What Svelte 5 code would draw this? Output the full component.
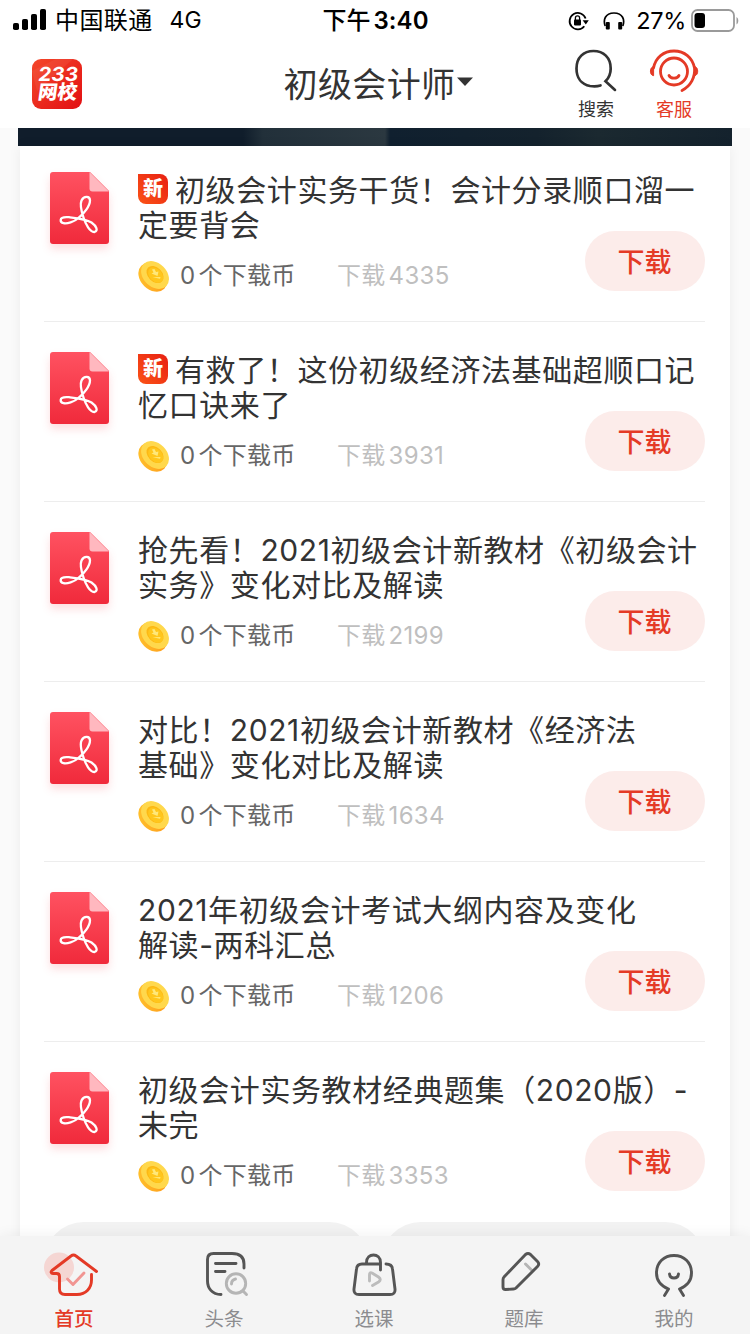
<script lang="ts">
	type Doc = { lines: string[]; downloads: number; isNew?: boolean };

	const docs: Doc[] = [
		{ lines: ['初级会计实务干货！会计分录顺口溜一', '定要背会'], downloads: 4335, isNew: true },
		{ lines: ['有救了！这份初级经济法基础超顺口记', '忆口诀来了'], downloads: 3931, isNew: true },
		{ lines: ['抢先看！2021初级会计新教材《初级会计', '实务》变化对比及解读'], downloads: 2199 },
		{ lines: ['对比！2021初级会计新教材《经济法', '基础》变化对比及解读'], downloads: 1634 },
		{ lines: ['2021年初级会计考试大纲内容及变化', '解读-两科汇总'], downloads: 1206 },
		{ lines: ['初级会计实务教材经典题集（2020版）-', '未完'], downloads: 3353 }
	];

	const tabs = [
		{ id: 'home', label: '首页' },
		{ id: 'news', label: '头条' },
		{ id: 'course', label: '选课' },
		{ id: 'exam', label: '题库' },
		{ id: 'mine', label: '我的' }
	];

	let active = $state('home');
</script>

<svg class="defs" width="0" height="0">
	<defs>
		<linearGradient id="pdf" x1="0" y1="0" x2="0" y2="1">
			<stop offset="0" stop-color="#ff5261" />
			<stop offset="1" stop-color="#f02a3b" />
		</linearGradient>
		<linearGradient id="edge" x1="0" y1="0" x2="1" y2="1">
			<stop offset="0" stop-color="#ffc62e" />
			<stop offset="1" stop-color="#ff9218" />
		</linearGradient>
		<linearGradient id="logo" x1="0" y1="0" x2="1" y2="1">
			<stop offset="0" stop-color="#f4472a" />
			<stop offset="1" stop-color="#e20f12" />
		</linearGradient>
	</defs>
</svg>

<div class="app">
	<div class="status">
		<div class="side">
			<svg class="signal" width="34" height="22" viewBox="0 0 34 22">
				<rect x="0" y="14" width="6" height="7" rx="1.8" />
				<rect x="9" y="10" width="6" height="11" rx="1.8" />
				<rect x="18" y="5" width="6" height="16" rx="1.8" />
				<rect x="27" y="0" width="6" height="21" rx="1.8" />
			</svg>
			<span class="carrier">中国联通</span>
			<span class="net">4G</span>
		</div>
		<div class="clock">下午<span>3:40</span></div>
		<div class="side right">
			<svg width="22" height="20" viewBox="0 0 22 20">
				<path d="M16.3 15.2A8.2 8.2 0 1 1 17.6 7.5" fill="none" stroke="#000" stroke-width="1.8" />
				<path d="M14.6 9.2h6.2l-3 4.3z" />
				<rect x="6" y="8.6" width="7" height="5.8" rx=".8" />
				<path d="M7.4 9V7a2.1 2.1 0 0 1 4.2 0v2" fill="none" stroke="#000" stroke-width="1.3" />
			</svg>
			<svg class="phones" width="22" height="20" viewBox="0 0 22 20">
				<path d="M2.2 15C0 9 2 2 11 2s11 7 8.800 13" fill="none" stroke="#000" stroke-width="1.7" />
				<rect x="2.800" y="11" width="4" height="7.500" rx="1" />
				<rect x="15.200" y="11" width="4" height="7.500" rx="1" />
			</svg>
			<span class="percent">27%</span>
			<svg width="48" height="24" viewBox="0 0 48 24">
				<rect x="1" y="1" width="42" height="21" rx="5.500" fill="none" stroke="#9a9a9a" stroke-width="1.800" />
				<rect x="3.500" y="4" width="10.500" height="15" rx="3" />
				<path d="M45.500 8c2.400 1.500 2.400 6 0 7.500z" fill="#9a9a9a" />
			</svg>
		</div>
	</div>

	<header>
		<svg class="logo" width="50" height="50" viewBox="0 0 50 50">
			<rect width="50" height="50" rx="9" fill="url(#logo)" />
			<path d="M0 12 24 0h17L5 32z" fill="#fff" opacity=".06" />
			<g fill="#fff" font-weight="800" transform="skewX(-8)">
				<text x="8.500" y="22" font-size="19.500" font-weight="700" textLength="40" lengthAdjust="spacingAndGlyphs">233</text>
				<text x="11" y="40.500" font-size="19.500" textLength="39" lengthAdjust="spacingAndGlyphs">网校</text>
			</g>
		</svg>
		<button class="subject">
			初级会计师
			<svg width="18" height="10" viewBox="0 0 18 10"><path d="M1 .5h16L9 9z" fill="#333" /></svg>
		</button>
		<div class="actions">
			<button class="action">
				<svg width="48" height="46" viewBox="0 0 48 46" fill="none" stroke="#333" stroke-width="2.700" stroke-linecap="round">
					<path d="M28.500 37.500C25 38.600 22 38.600 18 38 9.500 36.500 4.500 30 4.500 20.500 4.500 9.500 11.500 3 21.500 3s17.200 6.500 17.200 17.500c0 5-1.800 9.500-5.200 12.800l9.500 8.600" />
				</svg>
				<span>搜索</span>
			</button>
			<button class="action red">
				<svg width="50" height="46" viewBox="0 0 50 46" fill="none" stroke="#e43a26" stroke-width="2.800" stroke-linecap="round">
					<path d="M4.500 20C6.500 9.500 14.500 3 25 3s18.500 6.500 20.500 17c.8 9-3.500 18-12.500 22.500" />
					<circle cx="25" cy="23.500" r="13.500" />
					<path d="M20 27.500c1.800 3.500 8.200 3.500 10 0" />
					<path d="M4.600 18.500v9.200C.3 27.400.3 18.800 4.600 18.500zM45.600 18.500v9.200c4.200-.300 4.200-8.900 0-9.200z" fill="#e43a26" stroke-width="1" />
				</svg>
				<span>客服</span>
			</button>
		</div>
	</header>

	<main>
		<div class="banner"></div>
		<div class="card">
			{#each docs as doc}
				<article>
					<svg class="pdf" width="59" height="72" viewBox="0 0 59 72">
						<path d="M3 0h37l19 19v50a3 3 0 0 1-3 3H3a3 3 0 0 1-3-3V3a3 3 0 0 1 3-3z" fill="url(#pdf)" />
						<path d="M39.500 0 59 19.500H42.500a3 3 0 0 1-3-3z" fill="#ffb8bf" />
						<path
							d="M10.700 47.800C11 45 14.500 44.800 19 45.200 26 46 36 47 41.500 50.500 46.500 54 48.500 59 44.500 60 40 60.500 35.500 52 33.500 45.500 31.500 39.500 29.500 33 31.500 28.500 34 23.500 40 24 40 28.500 40 34 34 41.500 28.500 46 24 50 17 52 13.500 51.200 11.500 50.700 10.500 49.500 10.700 47.800z"
							fill="none"
							stroke="#fff"
							stroke-width="2.300"
						/>
					</svg>
					<div class="info">
						<h2>
							{#if doc.isNew}<i class="new">新</i>{/if}{doc.lines[0]}<br />{doc.lines[1]}
						</h2>
						<div class="meta">
							<svg width="32" height="32" viewBox="0 0 32 32">
								<ellipse cx="14.800" cy="17.200" rx="12.300" ry="16.300" transform="rotate(-45 14.800 17.200)" fill="url(#edge)" />
								<ellipse cx="17" cy="15" rx="11.800" ry="15.800" transform="rotate(-45 17 15)" fill="#ffd84c" />
								<ellipse cx="17" cy="14.500" rx="7" ry="9.800" transform="rotate(-45 17 14.500)" fill="#fdb813" />
								<ellipse cx="17.700" cy="15.200" rx="6.200" ry="8.800" transform="rotate(-45 17.700 15.200)" fill="#ffc61c" />
								<path d="M14 9.500 16.500 9l1.500 3 2.500-.500-1 4.500-6-2.500 2-1zM14.500 17.200l7.500 1.500.500-1.800" fill="#ffe87a" />
							</svg>
							<span class="price">0<b></b>个下载币</span>
							<span class="count">下载<b></b>{doc.downloads}</span>
						</div>
					</div>
					<button class="download">下载</button>
				</article>
			{/each}
			<div class="more">
				<div></div>
				<div></div>
			</div>
		</div>
	</main>

	<nav>
		{#each tabs as tab}
			<button class="tab" class:active={active === tab.id} onclick={() => (active = tab.id)}>
				<svg width="60" height="50" viewBox="0 0 60 50" fill="none" stroke="#555" stroke-width="2.900" stroke-linecap="round" stroke-linejoin="round">
					{#if tab.id === 'home'}
						<circle cx="15" cy="17.500" r="15" fill="#f5d6d3" stroke="none" />
						<path d="M23.500 29 29 34.500 40 23" stroke="#f19592" />
						<path d="M52.500 21.500 32 6Q29.500 4 27 6L8 20.500C6.500 22 7 23.500 9 23.500h3.500Q15.500 23.500 15.500 26.500V39Q15.500 44.500 21 44.500H33C42 44.500 47.500 38 47.500 30V24.500" stroke="#e43a26" />
					{:else if tab.id === 'news'}
						<path d="M27 44.500C18 44.500 13.500 38 13.500 31V9.500Q13.500 3.500 19.500 3.500H38C47 3.500 50 8 50 14v4M21.500 13.500H42M21.500 21.500H31" />
						<circle cx="42" cy="33.500" r="9.700" stroke="#b5b5b5" />
						<path d="M49 41l3.500 3.500M37.500 34q0-4 4-5" stroke="#b5b5b5" />
					{:else if tab.id === 'course'}
						<path d="M36.500 20V12.500C36.500 2.500 22.500 2.500 22.500 12.500v1.500H36.500M22.500 14H18Q13 14 12.500 19L10 39Q9.500 44.500 15 44.500H46Q51.500 44.500 51 39L48.500 19Q48 14 42 14" />
						<path d="M28.500 35.500 34.500 32Q38 29.500 34.500 27L28 23Q25.500 22 25.500 25v6" stroke="#bcbcbc" />
					{:else if tab.id === 'exam'}
						<path d="M31.500 14 38 20.500" stroke="#b5b5b5" />
						<path d="M10 27 31.500 4.500Q34 2.500 36.500 4.500L43.500 11.500Q46 14 43.500 16.500L22 38Q21 39 19.500 39L11.500 39.500Q9 39.500 9 37V30Q9 28 10 27z" />
					{:else}
						<path d="M20.500 45.500 24.500 39C16 35.500 12.500 30 12.500 23 12.500 12.500 20 5.500 30 5.500S47.500 12.500 47.500 23C47.500 30 44 35.500 35.500 39l4 6.500M25.500 24q.500 4 4.500 4t4.500-4" />
					{/if}
				</svg>
				<span>{tab.label}</span>
			</button>
		{/each}
	</nav>
</div>

<style>
	:global(body) {
		background: #fff;
	}

	.app {
		display: flex;
		flex-direction: column;
		width: 750px;
		height: 1334px;
		overflow: hidden;
		color: #333;
		font-family: Inter, 'Noto Sans CJK SC', sans-serif;
	}

	.defs {
		position: absolute;
	}

	svg {
		display: block;
		flex: none;
	}

	button {
		padding: 0;
		border: none;
		background: none;
		color: inherit;
		font: inherit;
		cursor: pointer;
	}

	.status {
		display: flex;
		align-items: center;
		height: 40px;
		padding: 1px 11px 0 13px;
		box-sizing: border-box;
		color: #000;
		font-size: 24px;
		line-height: 39px;
		white-space: nowrap;
	}

	.side {
		display: flex;
		flex: 1;
		align-items: center;
	}

	.right {
		justify-content: flex-end;
	}

	.signal {
		margin-bottom: 1px;
	}

	.carrier {
		margin-left: 8px;
		letter-spacing: .4px;
	}

	.net {
		margin-left: 17px;
		font-size: 23px;
	}

	.clock {
		margin-right: 1px;
		font-weight: 500;
	}

	.clock span {
		margin-left: 3px;
		font-weight: 600;
		letter-spacing: .1px;
	}

	.phones {
		margin: 0 11px 0 13px;
	}

	.percent {
		margin-right: 5px;
		font-size: 23.5px;
		letter-spacing: -.3px;
	}

	header {
		display: flex;
		align-items: center;
		justify-content: space-between;
		height: 88px;
		padding: 0 51px 0 32px;
		box-sizing: border-box;
	}

	.logo {
		margin-right: 103px;
	}

	.subject {
		display: flex;
		align-items: center;
		margin-top: -4px;
		font-size: 34px;
		letter-spacing: .4px;
	}

	.actions {
		display: flex;
		gap: 29px;
		padding-top: 3px;
	}

	.action {
		display: flex;
		flex-direction: column;
		align-items: center;
		font-size: 18px;
		line-height: 26px;
	}

	.action span {
		margin-top: 3px;
	}

	.red {
		color: #e43a26;
	}

	main {
		flex: 1;
		min-height: 0;
		overflow: hidden;
		background: #fafafa;
	}

	.banner {
		height: 18px;
		margin: 0 18px;
		background: linear-gradient(90deg, #101d2b 0, #101d2b 225px, #22303a 245px, #2b3840 367px, #10202f 372px, #14222d 520px, #1b2930 580px, #14222d 100%);
	}

	.card {
		margin: 0 20px;
		padding: 0 25px 0 24px;
		background: #fff;
		box-shadow: 0 0 12px rgba(0, 0, 0, .06);
	}

	article {
		display: flex;
		height: 176px;
		margin-bottom: 4px;
		padding: 26px 0 0 6px;
		border-bottom: 1px solid #ededed;
		box-sizing: border-box;
	}

	article:nth-last-child(2) {
		margin-bottom: 0;
		border-color: transparent;
	}

	.pdf {
		filter: drop-shadow(0 5px 4px rgba(240, 42, 59, .16));
	}

	.info {
		flex: 1;
		width: 0;
		margin-left: 29px;
	}

	h2 {
		height: 70px;
		margin: 1px 0 0;
		font-size: 30px;
		font-weight: 400;
		letter-spacing: .6px;
		line-height: 35px;
		white-space: nowrap;
	}

	.new {
		display: inline-block;
		width: 30px;
		height: 30px;
		margin: -5px 7px 0 0;
		border-radius: 0 8px 8px 8px;
		background: linear-gradient(45deg, #fb5317, #e82012);
		color: #fff;
		font-size: 20px;
		font-style: normal;
		font-weight: 800;
		letter-spacing: 0;
		line-height: 30px;
		text-align: center;
		vertical-align: 5px;
	}

	.meta {
		display: flex;
		align-items: center;
		height: 32px;
		margin-top: 17px;
		font-size: 24px;
		letter-spacing: .3px;
		line-height: 32px;
	}

	.meta b {
		display: inline-block;
		width: 3px;
	}

	.price {
		width: 157px;
		margin-left: 10px;
		color: #666;
	}

	.count {
		color: #bfbfbf;
	}

	.download {
		flex: none;
		width: 120px;
		height: 60px;
		margin-top: 59px;
		padding: 0 1px 2px 0;
		border-radius: 30px;
		background: #fcecea;
		color: #e43a26;
		font-size: 27px;
		font-weight: 500;
	}

	.more {
		display: flex;
		gap: 12px;
	}

	.more div {
		flex: 1;
		height: 80px;
		border-radius: 40px;
		background: #f2f2f2;
	}

	nav {
		display: flex;
		height: 98px;
		background: #f4f4f4;
		box-shadow: 0 -2px 12px rgba(0, 0, 0, .05);
	}

	.tab {
		display: flex;
		flex: 1;
		flex-direction: column;
		align-items: center;
		padding: 14px 2px 0 0;
		color: #8c8c8f;
		font-size: 19.5px;
		line-height: 30px;
	}

	.tab span {
		margin-top: 4px;
	}

	.tab.active {
		color: #e43a26;
		font-weight: 500;
	}
</style>
